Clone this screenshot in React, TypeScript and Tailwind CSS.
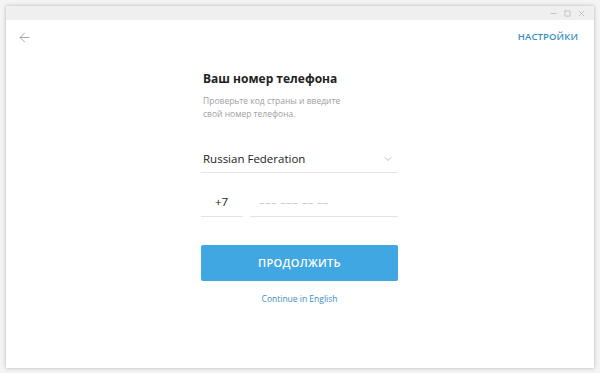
import { ArrowLeft, ChevronDown, Minus, Square, X } from "lucide-react";

export default function App() {
  return (
    <div className="w-[600px] h-[373px] bg-[#f4f4f4] p-[6px] pb-[5px] font-['Open_Sans',sans-serif]">
      <div className="w-full h-full flex flex-col bg-white shadow-[0_0_4px_rgba(0,0,0,0.25)]">
        {/* title bar */}
        <div className="h-[14px] bg-[#efefef] flex items-center justify-end gap-[6px] pr-[8px] text-[#b5b5b5]">
          <Minus size={9} strokeWidth={2} />
          <Square size={7} strokeWidth={2.5} />
          <X size={9} strokeWidth={2} />
        </div>

        {/* header */}
        <div className="flex items-center justify-between pl-[11px] pr-[16px] pt-[10px]">
          <ArrowLeft size={15} strokeWidth={1.5} className="text-[#a0a0a0]" />
          <span className="text-[9.5px] font-semibold text-[#3a8ec4] tracking-[0.1px]">НАСТРОЙКИ</span>
        </div>

        {/* form */}
        <div className="flex flex-col w-[197px] ml-[195px] mt-[26px]">
          <h1 className="text-[12px] font-bold text-[#222] leading-[16px] pl-[2px]">Ваш номер телефона</h1>
          <p className="text-[8.5px] text-[#a0a0a0] leading-[13px] mt-[7px] pl-[2px]">
            Проверьте код страны и введите
            <br />
            свой номер телефона.
          </p>

          <div className="mt-[25px] flex items-center justify-between border-b border-[#e4e4e4] h-[28px] pl-[2px] pr-[4px]">
            <span className="text-[11.5px] text-[#222]">Russian Federation</span>
            <ChevronDown size={12} strokeWidth={1.5} className="text-[#a8a8a8]" />
          </div>

          <div className="mt-[15px] flex gap-[7px] h-[29px]">
            <div className="w-[42px] border-b border-[#e4e4e4] flex items-center pl-[14px]">
              <span className="text-[11.5px] text-[#222]">+7</span>
            </div>
            <div className="flex-1 border-b border-[#e4e4e4] flex items-center pl-[9px]">
              <span className="text-[11px] text-[#c8c8c8] tracking-[0.5px]">––– ––– –– ––</span>
            </div>
          </div>

          <button className="mt-[28px] h-[36px] w-full bg-[#40a7e3] rounded-[2px] text-white text-[11px] font-semibold tracking-[0.3px]">
            ПРОДОЛЖИТЬ
          </button>

          <div className="mt-[12px] text-center text-[8.5px] text-[#3a8ec4]">Continue in English</div>
        </div>
      </div>
    </div>
  );
}
